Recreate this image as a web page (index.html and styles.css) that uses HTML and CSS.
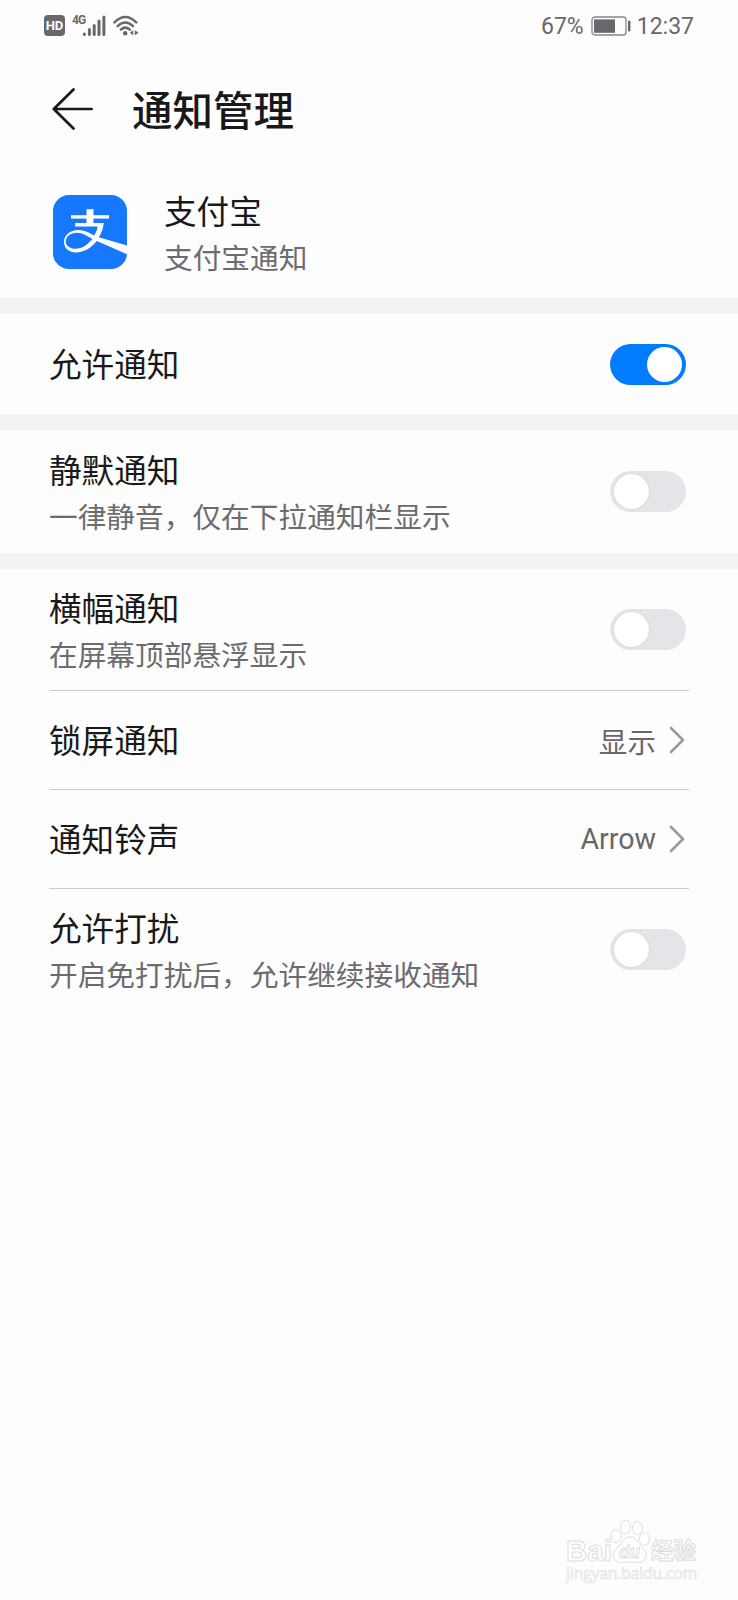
FILE: index.html
```
<!DOCTYPE html>
<html lang="zh-CN">
<head>
    <meta charset="utf-8">
    <meta name="viewport" content="width=device-width, initial-scale=1.0">
    <title>通知管理</title>
    <link rel="stylesheet" href="styles.css">
</head>
<body>
    <div class="screen">
        <div class="status-bar">
            <div class="status-left">
                <span class="hd">HD</span>
                <span class="network">4G</span>
                <svg class="signal" width="23" height="22" viewBox="0 0 23 22">
                    <path d="M1.4 19.5v-.5M6.4 19.5v-5M11.2 19.5v-9M16 19.5v-13.5M20.9 19.5v-17.5" stroke="#69676b" stroke-width="3" stroke-linecap="round"/>
                </svg>
                <svg class="wifi" width="27" height="22" viewBox="0 0 27 22">
                    <g fill="none" stroke="#69676b" stroke-width="2.5" stroke-linecap="round">
                        <path d="M1.4 7.4Q12.3-3.4 23.2 7.4"/>
                        <path d="M4.6 11.1Q12.3 4 20 11.1"/>
                        <path d="M7.8 14.7Q12.3 10.6 16.8 14.7"/>
                    </g>
                    <circle cx="12.2" cy="18.2" r="2.2" fill="#69676b"/>
                    <path d="M20.2 15.2v5l-3.4-2.5zM21.8 15.2v5l3.8-2.5z" fill="#69676b"/>
                </svg>
            </div>
            <div class="status-right">
                <span class="percent">67%</span>
                <svg class="battery" width="40" height="20" viewBox="0 0 40 20">
                    <rect x="1" y="1" width="34" height="18" rx="3" fill="none" stroke="#858387" stroke-width="1.3"/>
                    <rect x="3" y="3.4" width="21" height="13.4" fill="#69676b"/>
                    <rect x="37" y="4.6" width="2.4" height="11" rx="1" fill="#69676b"/>
                </svg>
                <span class="clock">12:37</span>
            </div>
        </div>

        <div class="header">
            <svg class="back" width="42" height="42" viewBox="0 0 42 42">
                <path d="M21.5 1.5L1.8 21L21.5 40.5M1.8 21H39.6" fill="none" stroke="#19191b" stroke-width="2.7" stroke-linecap="round" stroke-linejoin="round"/>
            </svg>
            <h1>通知管理</h1>
        </div>

        <div class="app">
            <svg class="app-icon" width="74" height="74" viewBox="0 0 74 74">
                <rect width="74" height="74" rx="16" fill="#1677ff"/>
                <g fill="#fff">
                    <rect x="18" y="20.2" width="38" height="3.4"/>
                    <path d="M33.5 14.2h7v15h-7z"/>
                    <path d="M22.2 28H50.8C50 34.5 48 39 45.8 42.2L74 50.4V59.3L43.8 46C38.5 52.5 31.5 57.4 23 57.4C15.2 57.4 11 52.5 11 47C11 40.2 17 35 25 35C31.3 35 36.5 37.8 41 40.5C43.2 37.4 44.2 34.3 44.6 31.4H22.2zM39.3 44C34.5 41 29.5 37.8 24 37.8C17.5 37.8 12.8 41.5 12.8 46.5C12.8 50.8 17 53.8 22.5 53.8C29.2 53.8 34.8 49.5 39.3 44z" fill-rule="evenodd"/>
                </g>
            </svg>
            <div class="label">
                <div class="title">支付宝</div>
                <div class="desc">支付宝通知</div>
            </div>
        </div>

        <div class="group">
            <div class="item allow">
                <div class="title">允许通知</div>
                <div class="switch on"></div>
            </div>
        </div>

        <div class="group">
            <div class="item silent">
                <div class="label">
                    <div class="title">静默通知</div>
                    <div class="desc">一律静音，仅在下拉通知栏显示</div>
                </div>
                <div class="switch"></div>
            </div>
        </div>

        <div class="group">
            <div class="item double line">
                <div class="label">
                    <div class="title">横幅通知</div>
                    <div class="desc">在屏幕顶部悬浮显示</div>
                </div>
                <div class="switch"></div>
            </div>
            <div class="item single line">
                <div class="title">锁屏通知</div>
                <div class="value">
                    <span>显示</span>
                    <svg width="16" height="28" viewBox="0 0 16 28"><path d="M2 2L14 14L2 26" fill="none" stroke="#9b999d" stroke-width="2.6" stroke-linecap="round" stroke-linejoin="round"/></svg>
                </div>
            </div>
            <div class="item single line">
                <div class="title">通知铃声</div>
                <div class="value">
                    <span>Arrow</span>
                    <svg width="16" height="28" viewBox="0 0 16 28"><path d="M2 2L14 14L2 26" fill="none" stroke="#9b999d" stroke-width="2.6" stroke-linecap="round" stroke-linejoin="round"/></svg>
                </div>
            </div>
            <div class="item double last">
                <div class="label">
                    <div class="title">允许打扰</div>
                    <div class="desc">开启免打扰后，允许继续接收通知</div>
                </div>
                <div class="switch"></div>
            </div>
        </div>

        <div class="watermark">
            <svg width="140" height="72" viewBox="0 0 140 72">
                <g fill="#fff" stroke="#dddddd" stroke-width="1">
                    <text class="wm-bold" x="1" y="46" font-size="29" textLength="46" lengthAdjust="spacingAndGlyphs">Bai</text>
                    <ellipse cx="51" cy="21" rx="5" ry="6.3"/>
                    <ellipse cx="60.5" cy="12" rx="5" ry="6.8"/>
                    <ellipse cx="72.5" cy="13" rx="5" ry="6.5"/>
                    <ellipse cx="79.5" cy="24" rx="5" ry="6.3"/>
                    <path d="M65 22C58 22 57 29 52 33C48 37 47 41 50 45C53 49 59 47 65 47C71 47 77 49 80 44C83 39 80 35 76 31C72 27 71 22 65 22z"/>
                    <text class="wm-du" x="54" y="43" font-size="19" textLength="21" lengthAdjust="spacingAndGlyphs">du</text>
                    <text class="wm-cjk" x="86" y="44" font-size="22.5" textLength="45">经验</text>
                </g>
                <text class="wm-url" x="1" y="64" font-size="15.5" textLength="131">jingyan.baidu.com</text>
            </svg>
        </div>
    </div>
</body>
</html>
```

FILE: styles.css
```
* {
    margin: 0;
    padding: 0;
    box-sizing: border-box;
}

body {
    font-family: Roboto, 'Noto Sans CJK SC', sans-serif;
    background-color: #fdfdfd;
    color: #19191b;
}

.screen {
    display: flex;
    flex-direction: column;
    width: 738px;
    height: 1600px;
    overflow: hidden;
}

svg {
    display: block;
    flex-shrink: 0;
}

/* Status bar */
.status-bar {
    display: flex;
    justify-content: space-between;
    height: 52px;
    padding: 0 44px;
    color: #69676b;
}

.status-left {
    display: flex;
    align-items: flex-start;
    padding-top: 15px;
}

.hd {
    width: 21px;
    height: 21px;
    border-radius: 4px;
    background-color: #69676b;
    color: #fff;
    font-size: 13px;
    font-weight: 700;
    line-height: 21px;
    text-align: center;
}

.network {
    width: 12px;
    margin-top: -1px;
    margin-left: 7px;
    font-size: 12px;
    font-weight: 700;
    line-height: 12px;
    letter-spacing: -1px;
}

.signal {
    margin-left: -1px;
}

.wifi {
    margin-left: 7px;
}

.status-right {
    display: flex;
    align-items: center;
    font-size: 23px;
}

.battery {
    margin: 0 6px 0 7px;
}

/* Page header */
.header {
    display: flex;
    align-items: center;
    height: 114px;
    padding-left: 52px;
}

.header h1 {
    margin-left: 38px;
    padding-top: 5px;
    font-size: 40.5px;
    font-weight: 500;
    line-height: 60px;
}

.app {
    display: flex;
    align-items: center;
    height: 132px;
    padding: 0 0 0 53px;
}

.app .label {
    margin-left: 37px;
}

.label {
    padding-top: 7px;
}

.title {
    font-size: 32.6px;
    line-height: 46px;
}

.desc {
    color: #6d6b6f;
    font-size: 28.7px;
    line-height: 46px;
}

/* Settings list */
.group {
    border-top: 16px solid #f3f2f5;
}

.item {
    display: flex;
    justify-content: space-between;
    align-items: center;
    margin: 0 49px;
    padding-right: 3px;
}

.allow {
    height: 100px;
}

.allow .title {
    padding-top: 4px;
}

.silent {
    height: 123px;
}

.double {
    height: 122px;
}

.last {
    height: 120px;
}

.single {
    height: 99px;
}

.single .title {
    padding-top: 4px;
}

.line {
    border-bottom: 1px solid #cbcacd;
}

.value {
    display: flex;
    align-items: center;
    gap: 13px;
    padding-right: 1px;
    color: #69676b;
    font-size: 28.6px;
}

.switch {
    width: 76px;
    height: 41px;
    padding: 3px 4px;
    border-radius: 21px;
    background-color: #e6e4e8;
}

.switch::before {
    content: '';
    display: block;
    width: 35px;
    height: 35px;
    border-radius: 50%;
    background-color: #fff;
    box-shadow: 0 0 2px rgba(0, 0, 0, 0.15);
}

.switch.on {
    background-color: #007dff;
}

.switch.on::before {
    margin-left: 33px;
    box-shadow: none;
}

/* Corner logo */
.watermark {
    align-self: flex-end;
    margin-top: auto;
    margin-right: 33px;
    margin-bottom: 13px;
}

.wm-bold,
.wm-du {
    font-family: 'Liberation Sans', sans-serif;
    font-weight: 700;
}

.wm-du {
    font-style: italic;
}

.wm-cjk {
    font-family: 'Noto Sans CJK SC', sans-serif;
    font-weight: 700;
}

.wm-url {
    font-family: 'Open Sans', sans-serif;
    fill: #fff;
    stroke: #e3e3e3;
    stroke-width: 0.7;
}
```
